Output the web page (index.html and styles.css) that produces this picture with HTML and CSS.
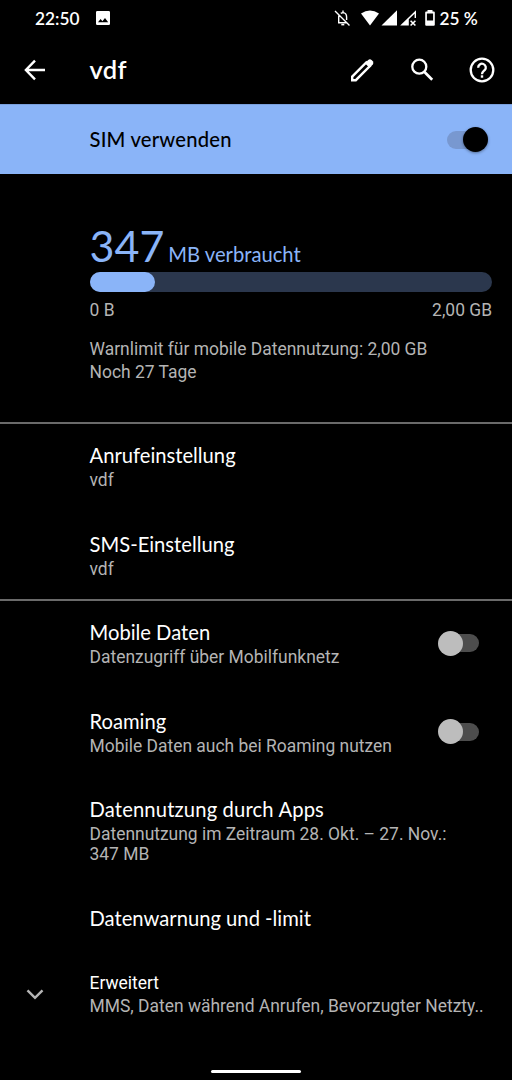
FILE: index.html
```html
<!DOCTYPE html>
<html lang="de">
<head>
    <meta charset="UTF-8">
    <meta name="viewport" content="width=device-width, initial-scale=1.0">
    <title>vdf</title>
    <link rel="stylesheet" href="styles.css">
</head>
<body>
    <!-- Statusleiste -->
    <div class="statusbar">
        <span class="clock">22:50</span>
        <svg class="picture" width="14" height="14" viewBox="0 0 14 14">
            <path fill="#fff" fill-rule="evenodd" d="M1.3 0h11.4A1.3 1.3 0 0 1 14 1.3v11.4a1.3 1.3 0 0 1-1.3 1.3H1.3A1.3 1.3 0 0 1 0 12.7V1.3A1.3 1.3 0 0 1 1.3 0zM2 11.2h10.2L9 7 6.4 10.2 4.6 8z"/>
        </svg>
        <svg class="status-icons" width="102" height="20" viewBox="0 0 102 20">
            <!-- Glocke aus -->
            <g fill="none" stroke="#fff" stroke-width="1.4">
                <path d="M1 3L15.5 17.500M4 14.800h9.500M4.700 14.500V9q0-1.200.5-2.200M6.800 5.400Q8 4.600 9 4.600q3.600.4 3.600 4.500v2.800M9 4.600V2.600"/>
                <path d="M7.300 16.600h3" stroke-width="1.600"/>
            </g>
            <!-- WLAN -->
            <path fill="#fff" d="M27 5.400Q36 -.4 45 5.400L36 17.600z"/>
            <path fill="#fff" d="M63 2.200V17.600H47.500z"/>
            <!-- Signal ohne Daten -->
            <path fill="#fff" fill-rule="evenodd" d="M82 2.200V10h-1.400V5.700L74.800 11.300V17.600H66.200z"/>
            <path stroke="#fff" stroke-width="1.600" d="M76.600 12.700l4.800 4.800M81.400 12.700l-4.800 4.800"/>
            <!-- Akku -->
            <path fill="#fff" fill-rule="evenodd" d="M93.500 2h5V3.500h1.300q1 0 1 1v12.200q0 1-1 1h-7.600q-1 0-1-1V4.500q0-1 1-1h1.300zM92.900 5.500v7h6.200v-7z"/>
        </svg>
        <span class="battery">25 %</span>
    </div>

    <!-- Kopfzeile -->
    <div class="toolbar">
        <svg class="back" width="24" height="24" viewBox="0 0 24 24">
            <path fill="none" stroke="#fff" stroke-width="2.400" d="M22 12H3.500M12 2.700L2.900 12 12 21.300"/>
        </svg>
        <h1 class="heading">vdf</h1>
        <svg class="edit" width="28" height="28" viewBox="0 0 28 28">
            <path fill="none" stroke="#fff" stroke-width="2.400" d="M4.200 24.200v-3.600L18.300 6.500l3.600 3.600L7.800 24.200z"/>
            <path fill="#fff" d="M17 7.200l3.200-3.200q1.700-1.300 3.400 0l1.200 1.200q1.200 1.700 0 3.300L21.600 11.700z"/>
        </svg>
        <svg class="search" width="28" height="28" viewBox="0 0 28 28">
            <circle cx="11.300" cy="10.700" r="7" fill="none" stroke="#fff" stroke-width="2.300"/>
            <path stroke="#fff" stroke-width="2.700" d="M16 15.500l8.200 8.200"/>
        </svg>
        <svg class="help" width="28" height="28" viewBox="0 0 28 28">
            <g fill="none" stroke="#fff" stroke-width="2.300">
                <circle cx="14" cy="14" r="11.300"/>
                <path d="M10.200 11.700a3.800 3.800 0 1 1 6.500 2.500C15.200 15.600 14 16 14 18.300"/>
            </g>
            <path fill="#fff" d="M12.800 19.300h2.400v2.400h-2.400z"/>
        </svg>
    </div>

    <div class="sim-bar">
        <span class="title">SIM verwenden</span>
        <span class="switch on"></span>
    </div>

    <!-- Datenverbrauch -->
    <div class="usage">
        <div class="amount"><span class="number">347</span><span class="unit">MB verbraucht</span></div>
        <div class="progress"><div class="progress-fill"></div></div>
        <div class="limits"><span>0 B</span><span>2,00 GB</span></div>
        <div class="info">Warnlimit für mobile Datennutzung: 2,00 GB<br>Noch 27 Tage</div>
    </div>

    <div class="group calls">
        <div class="row">
            <div class="title">Anrufeinstellung</div>
            <div class="summary">vdf</div>
        </div>
        <div class="row">
            <div class="title">SMS-Einstellung</div>
            <div class="summary">vdf</div>
        </div>
    </div>

    <div class="group">
        <div class="row with-switch">
            <div>
                <div class="title">Mobile Daten</div>
                <div class="summary">Datenzugriff über Mobilfunknetz</div>
            </div>
            <span class="switch"></span>
        </div>
        <div class="row with-switch">
            <div>
                <div class="title">Roaming</div>
                <div class="summary">Mobile Daten auch bei Roaming nutzen</div>
            </div>
            <span class="switch"></span>
        </div>
        <div class="row tall">
            <div class="title apps-title">Datennutzung durch Apps</div>
            <div class="summary">Datennutzung im Zeitraum 28. Okt. – 27. Nov.:<br>347 MB</div>
        </div>
        <div class="row short">
            <div class="title">Datenwarnung und -limit</div>
        </div>
        <div class="advanced">
            <svg class="chevron" width="18" height="12" viewBox="0 0 18 12">
                <path fill="none" stroke="#b4b4b4" stroke-width="2.400" d="M1.500 1.300L9 8.800l7.500-7.500"/>
            </svg>
            <div>
                <div class="advanced-title">Erweitert</div>
                <div class="summary">MMS, Daten während Anrufen, Bevorzugter Netzty..</div>
            </div>
        </div>
    </div>

    <div class="nav-handle"></div>
</body>
</html>
```
FILE: styles.css
```css
* {
    box-sizing: border-box;
}

body {
    margin: 0;
    width: 512px;
    height: 1080px;
    overflow: hidden;
    display: flex;
    flex-direction: column;
    background-color: #000;
    color: #fff;
    font-family: Roboto, sans-serif;
    font-size: 17.45px;
    white-space: nowrap;
}

svg {
    display: block;
    flex: none;
}

.statusbar {
    height: 36px;
    display: flex;
    align-items: center;
    padding: 0 0 0 35px;
    font-family: Lato, sans-serif;
    font-size: 17.3px;
    font-weight: 600;
}

.clock {
    width: 60.5px;
}

.status-icons {
    margin-left: 224px;
    margin-right: 4px;
}

.toolbar {
    height: 68px;
    display: flex;
    align-items: center;
    padding: 0 16px 0 23px;
}

.heading {
    flex: 1;
    margin: -2px 0 0 42.5px;
    font-family: Lato, sans-serif;
    font-size: 25.5px;
    font-weight: 600;
    letter-spacing: 0.3px;
}

.search,
.help {
    margin-left: 32px;
}

.sim-bar {
    height: 70px;
    display: flex;
    align-items: center;
    justify-content: space-between;
    padding: 0 24px 0 89.5px;
    border-top: 1px solid #799fdc;
    background-color: #8ab4f8;
    color: #000;
}

.title {
    font-family: Lato, sans-serif;
    font-size: 20.2px;
    line-height: 25px;
}

.sim-bar .title {
    font-weight: 500;
    letter-spacing: 0.2px;
}

.apps-title {
    letter-spacing: 0.15px;
}

.switch {
    flex: none;
    display: flex;
    align-items: center;
    width: 37px;
    height: 18px;
    margin-right: 9.5px;
    border-radius: 9px;
    background-color: #4d4d4d;
}

.switch::before {
    content: "";
    flex: none;
    width: 25px;
    height: 25px;
    margin-left: -4px;
    border-radius: 50%;
    background-color: #bdbdbd;
}

.switch.on {
    justify-content: flex-end;
    margin-right: 4px;
    background-color: #7898d0;
}

.switch.on::before {
    margin-right: -4px;
    background-color: #000;
    box-shadow: 0 1px 3px rgba(0, 0, 0, 0.4);
}

.usage {
    height: 248px;
    padding: 46px 20px 0 89.5px;
    color: #b4b4b4;
}

.amount {
    height: 52.4px;
    line-height: 51px;
    color: #8ab4f8;
    font-family: Lato, sans-serif;
}

.number {
    font-size: 43px;
}

.unit {
    margin-left: 4px;
    font-size: 20.2px;
}

.progress {
    height: 20px;
    border-radius: 10px;
    background-color: #2b374d;
}

.progress-fill {
    width: 65px;
    height: 20px;
    border-radius: 10px;
    background-color: #8ab4f8;
}

.limits {
    display: flex;
    justify-content: space-between;
    margin-top: 6.6px;
    line-height: 22px;
}

.info {
    margin-top: 17px;
    line-height: 23px;
}

.group {
    border-top: 2px solid #6a6a6a;
}

.calls {
    height: 177px;
}

.row {
    height: 88.5px;
    padding: 19px 24px 0 89.5px;
}

.summary {
    margin-top: 2px;
    color: #b4b4b4;
    line-height: 20.4px;
}

.with-switch {
    display: flex;
    justify-content: space-between;
    align-items: flex-start;
}

.with-switch .switch {
    margin-top: 14.4px;
}

.tall {
    height: 108.6px;
}

.short {
    height: 65px;
}

.advanced {
    display: flex;
    align-items: center;
    height: 86px;
    padding-left: 26px;
}

.advanced .summary {
    margin-top: 1px;
}

.chevron {
    margin-right: 45.5px;
}

.advanced-title {
    line-height: 23px;
}

.nav-handle {
    width: 90px;
    height: 3px;
    margin: auto auto 7px;
    border-radius: 2px;
    background-color: #fff;
}
```
